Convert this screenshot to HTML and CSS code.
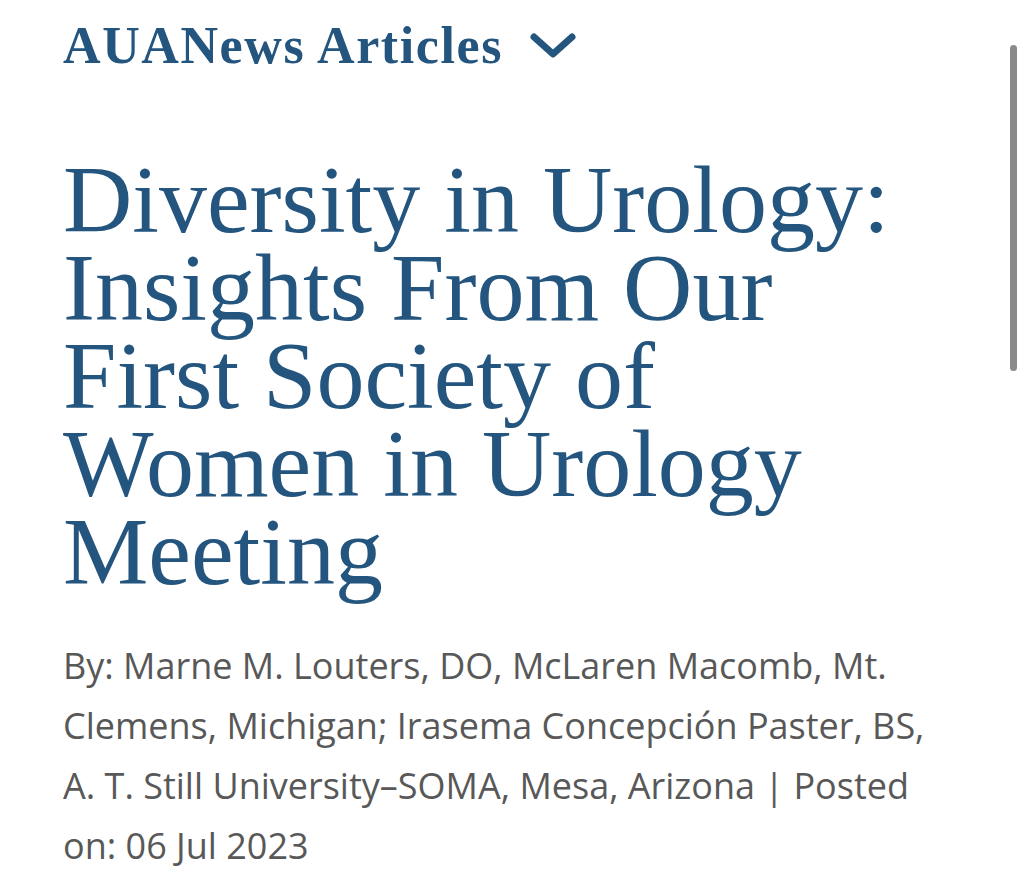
FILE: index.html
```html
<!DOCTYPE html>
<html lang="en">
<head>
<meta charset="utf-8">
<title>Diversity in Urology</title>
<link rel="stylesheet" href="styles.css">
</head>
<body>
<main class="page">
  <header class="section-head">
    <h2 class="section-title">AUANews Articles</h2>
    <svg class="chevron" width="48" height="28" viewBox="0 0 48 28" aria-hidden="true">
      <path d="M5 5 L24 22 L43 5" fill="none" stroke="#24557f" stroke-width="7" stroke-linecap="round" stroke-linejoin="round"/>
    </svg>
  </header>
  <article class="article">
    <h1 class="article-title">Diversity in Urology: Insights From Our First Society of Women in Urology Meeting</h1>
    <p class="byline">By: Marne M. Louters, DO, McLaren Macomb, Mt. Clemens, Michigan; Irasema Concepción Paster, BS, A. T. Still University–SOMA, Mesa, Arizona | Posted on: 06 Jul 2023</p>
  </article>
</main>
<div class="scrollbar"></div>
</body>
</html>
```
FILE: styles.css
```css
html, body {
  margin: 0;
  padding: 0;
  background: #ffffff;
}
body {
  width: 1024px;
  height: 884px;
  overflow: hidden;
  position: relative;
}
.page {
  padding: 14px 0 0 63px;
  width: 870px;
}
.section-head {
  display: flex;
  align-items: center;
  gap: 26px;
}
.section-title {
  margin: 0;
  font-family: "Liberation Serif", "DejaVu Serif", serif;
  font-weight: bold;
  font-size: 52px;
  line-height: 64px;
  letter-spacing: 1.6px;
  color: #24557f;
}
.chevron {
  display: block;
}
.article-title {
  margin: 78px 0 0 0;
  font-family: "Liberation Serif", "DejaVu Serif", serif;
  font-weight: normal;
  font-size: 96px;
  line-height: 88px;
  color: #24557f;
}
.byline {
  margin: 40px 0 0 0;
  font-family: "Open Sans", "Noto Sans", sans-serif;
  font-size: 36px;
  line-height: 60px;
  color: #585858;
}
.scrollbar {
  position: absolute;
  top: 45px;
  left: 1010px;
  width: 7px;
  height: 326px;
  border-radius: 4px;
  background: #8a8a8a;
}
```
